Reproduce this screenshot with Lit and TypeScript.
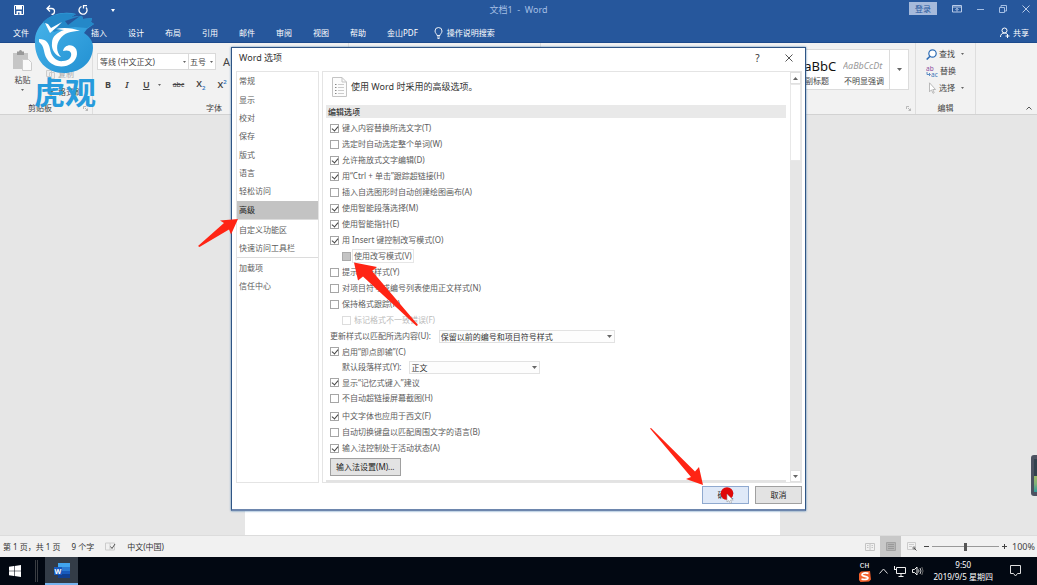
import { LitElement, html, css, svg } from "lit";
import { customElement, property } from "lit/decorators.js";
import { classMap } from "lit/directives/class-map.js";

interface Option {
  label: string;
  checked?: boolean;
  level?: number;
  state?: "focus" | "disabled";
}

const navGroups: string[][] = [
  ["常规", "显示", "校对", "保存", "版式", "语言", "轻松访问", "高级"],
  ["自定义功能区", "快速访问工具栏"],
  ["加载项", "信任中心"],
];

const editing: Option[] = [
  { label: "键入内容替换所选文字(T)", checked: true },
  { label: "选定时自动选定整个单词(W)" },
  { label: "允许拖放式文字编辑(D)", checked: true },
  { label: "用“Ctrl + 单击”跟踪超链接(H)", checked: true },
  { label: "插入自选图形时自动创建绘图画布(A)" },
  { label: "使用智能段落选择(M)", checked: true },
  { label: "使用智能指针(E)", checked: true },
  { label: "用 Insert 键控制改写模式(O)", checked: true },
  { label: "使用改写模式(V)", level: 1, state: "focus" },
  { label: "提示更新样式(Y)" },
  { label: "对项目符号或编号列表使用正文样式(N)" },
  { label: "保持格式跟踪(R)" },
  { label: "标记格式不一致错误(F)", level: 1, state: "disabled" },
];

const language: Option[] = [
  { label: "中文字体也应用于西文(F)", checked: true },
  { label: "自动切换键盘以匹配周围文字的语言(B)" },
  { label: "输入法控制处于活动状态(A)", checked: true },
];

const base = css`
  * {
    box-sizing: border-box;
  }
  button,
  input,
  select {
    font: inherit;
    color: inherit;
    margin: 0;
    padding: 0;
    border: 0;
    border-radius: 0;
    background: none;
    appearance: none;
  }
  svg {
    display: block;
    flex: none;
  }
`;

@customElement("options-dialog")
export class OptionsDialog extends LitElement {
  @property() selected = "高级";

  static styles = [
    base,
    css`
      :host {
        display: flex;
        flex-direction: column;
        background: #fff;
        border: 1px solid #2f5585;
        border-bottom-width: 2px;
        border-bottom-color: #6d86ad;
        box-shadow: 0 0 2px #4a7fb0;
        color: #5c5c5c;
      }
      .title {
        display: flex;
        align-items: center;
        height: 19px;
        padding: 0 12px 0 7px;
        color: #333;
      }
      .title h1 {
        flex: 1;
        margin: 0;
        font-size: 9px;
        font-weight: 400;
      }
      .title button {
        display: grid;
        place-items: center;
        width: 9px;
        height: 12px;
        font-size: 10px;
      }
      .title button + button {
        margin-left: 22px;
      }
      .body {
        flex: 1;
        min-height: 0;
        display: flex;
        gap: 3px;
        padding: 4px 3px 0 4px;
      }
      .nav {
        width: 83px;
        border: 1px solid #e4e4e4;
      }
      .group {
        display: flex;
        flex-direction: column;
      }
      .group + .group {
        border-top: 1px solid #dcdcdc;
      }
      .item {
        display: block;
        height: 18px;
        padding-left: 2px;
        text-align: left;
      }
      .group:first-child {
        height: 147px;
      }
      .group:first-child .item {
        flex: 1;
      }
      .group + .group .item:first-child {
        margin-top: 1px;
      }
      .item.on {
        background: #c3c3c3;
        color: #222;
      }
      .pane {
        flex: 1;
        display: flex;
        border: 1px solid #e4e4e4;
      }
      .scrolled {
        flex: 1;
        display: flex;
        flex-direction: column;
        padding: 0 4px 0 3px;
      }
      .head {
        display: flex;
        align-items: center;
        gap: 4px;
        height: 29px;
        margin-bottom: 4px;
        padding-left: 6px;
        font-size: 9px;
        color: #333;
      }
      h2 {
        height: 13px;
        margin: 0 0 2px;
        padding-left: 2px;
        line-height: 13px;
        font-size: 8px;
        font-weight: 500;
        background: #e9e9e9;
        color: #333;
      }
      .row {
        display: flex;
        align-items: center;
        height: 16px;
        padding-left: 4px;
      }
      .row.short {
        height: 15px;
      }
      .row.nested {
        padding-left: 16px;
      }
      .row.spaced {
        margin-top: 2px;
      }
      .check {
        display: flex;
        align-items: center;
        gap: 2px;
      }
      .check span {
        padding: 0 1px;
        line-height: 12px;
      }
      .check input {
        position: relative;
        width: 9px;
        height: 9px;
        border: 1px solid #a6a6a6;
      }
      .check input:checked::before {
        content: "";
        position: absolute;
        left: 2px;
        top: 0;
        width: 3px;
        height: 5px;
        border: solid #444;
        border-width: 0 1px 1px 0;
        transform: rotate(40deg);
      }
      .check.focus input {
        background: #c4c4c4;
        border-color: #aaa;
      }
      .check.focus span {
        outline: 1px solid #e6e6e6;
      }
      .check.disabled {
        color: #bbb;
      }
      .check.disabled input {
        border-color: #ddd;
      }
      .pick {
        position: relative;
        margin-left: 8px;
      }
      .pick select {
        display: block;
        height: 13px;
        padding: 0 1px;
        line-height: 11px;
        border: 1px solid #e2e2e2;
        background: #fdfdfd;
        color: #333;
      }
      .pick svg {
        position: absolute;
        right: 3px;
        top: 5px;
        pointer-events: none;
      }
      .wide select {
        width: 176px;
      }
      .narrow select {
        width: 131px;
      }
      .button {
        border: 1px solid #a0a0a0;
        background: #e3e3e3;
        color: #222;
        height: 18px;
      }
      .ime {
        align-self: flex-start;
        margin: 2px 0 0 4px;
        padding: 0 5px;
      }
      .next {
        height: 2px;
        margin-top: auto;
        background: #e3e3e3;
      }
      .bar {
        display: flex;
        flex-direction: column;
        width: 11px;
        background: #e6e6e6;
      }
      .bar button {
        display: grid;
        place-items: center;
        height: 12px;
        background: #fff;
        border: 1px solid #e0e0e0;
      }
      .thumb {
        height: 77px;
        background: #fff;
        border: 1px solid #e8e8e8;
      }
      .bar button:last-child {
        margin-top: auto;
      }
      .foot {
        display: flex;
        justify-content: flex-end;
        gap: 6px;
        padding: 3px 3px 5px;
      }
      .foot .button {
        width: 47px;
      }
      .foot .ok {
        background: #dfe9f8;
        border-color: #8fa9cf;
      }
    `,
  ];

  private check(o: Option) {
    return html`<label class="check ${o.state ?? ""}">
      <input type="checkbox" .checked=${!!o.checked} ?disabled=${o.state === "disabled"} />
      <span>${o.label}</span>
    </label>`;
  }

  private row(o: Option, cls = "") {
    return html`<div class="row ${o.level ? "nested" : ""} ${cls}">${this.check(o)}</div>`;
  }

  private arrow(up = false) {
    return html`<svg width="5" height="3" viewBox="0 0 5 3" aria-hidden="true">
      <path d=${up ? "M0 3h5L2.500 0z" : "M0 0h5L2.500 3z"} fill="#666" />
    </svg>`;
  }

  render() {
    return html`
      <header class="title">
        <h1>Word 选项</h1>
        <button aria-label="帮助">?</button>
        <button aria-label="关闭">
          <svg width="8" height="8" viewBox="0 0 8 8"><path d="M.5.5l7 7M7.500.5l-7 7" stroke="#555" fill="none" /></svg>
        </button>
      </header>
      <div class="body">
        <nav class="nav">
          ${navGroups.map(
            (g) => html`<div class="group">
              ${g.map(
                (n) => html`<button
                  class=${classMap({ item: true, on: n === this.selected })}
                  @click=${() => (this.selected = n)}
                >${n}</button>`
              )}
            </div>`
          )}
        </nav>
        <section class="pane">
          <div class="scrolled">
            <div class="head">
              <svg width="15" height="20" viewBox="0 0 15 20">
                <path d="M.5.5h9.500l4.500 4.500v14.500H.5z" fill="#fcfcfc" stroke="#c4c4c4" />
                <path d="M10 .5V5h4.500" fill="none" stroke="#c4c4c4" />
                <path d="M3 7.500h1.500M3 10.500h1.500M3 13.500h1.500M3 16.500h1.500" stroke="#888" />
                <path d="M6 7.500h6M6 10.500h6M6 13.500h6M6 16.500h6" stroke="#ccc" />
              </svg>
              <span>使用 Word 时采用的高级选项。</span>
            </div>
            <h2>编辑选项</h2>
            ${editing.map((o) => this.row(o))}
            <div class="row">
              <label for="match">更新样式以匹配所选内容(U):</label>
              <div class="pick wide">
                <select id="match"><option>保留以前的编号和项目符号样式</option></select>
                ${this.arrow()}
              </div>
            </div>
            ${this.row({ label: "启用“即点即输”(C)", checked: true }, "short")}
            <div class="row nested">
              <label for="para">默认段落样式(Y):</label>
              <div class="pick narrow">
                <select id="para"><option>正文</option></select>
                ${this.arrow()}
              </div>
            </div>
            ${this.row({ label: "显示“记忆式键入”建议", checked: true }, "short")}
            ${this.row({ label: "不自动超链接屏幕截图(H)" })}
            ${language.map((o, i) => this.row(o, i === 0 ? "spaced" : ""))}
            <button class="button ime">输入法设置(M)...</button>
            <div class="next"></div>
          </div>
          <div class="bar">
            <button aria-label="向上滚动">${this.arrow(true)}</button>
            <div class="thumb"></div>
            <button aria-label="向下滚动">${this.arrow()}</button>
          </div>
        </section>
      </div>
      <footer class="foot">
        <button class="button ok">确定</button>
        <button class="button">取消</button>
      </footer>
    `;
  }
}

const tabs = ["插入", "设计", "布局", "引用", "邮件", "审阅", "视图", "帮助", "金山PDF"];

const drop = html`<svg width="3" height="2" viewBox="0 0 3 2"><path d="M0 0h3L1.500 2z" fill="#666" /></svg>`;
const launcher = html`<svg width="5" height="5" viewBox="0 0 5 5"><path d="M.5 3V.5H3M2 2l2.500 2.500M4.500 2.500v2h-2" fill="none" stroke="#aaa" stroke-width=".8" /></svg>`;

@customElement("app-root")
export class AppRoot extends LitElement {
  static styles = [
    base,
    css`
      :host {
        position: relative;
        display: flex;
        flex-direction: column;
        min-height: 100vh;
        overflow: hidden;
        font: 8px/12px "Noto Sans", "Noto Sans CJK SC", sans-serif;
        color: #444;
        background: #e6e6e6;
      }
      .top {
        height: 43px;
        background: #26579c;
        border-bottom: 1px solid #1c4a8c;
        color: #fff;
      }
      .caption {
        display: grid;
        grid-template-columns: 1fr auto 1fr;
        align-items: center;
        height: 20px;
      }
      .quick {
        display: flex;
        align-items: center;
        gap: 22px;
        padding-left: 14px;
      }
      .name {
        font-size: 9px;
        color: #a5bfe4;
      }
      .win {
        display: flex;
        justify-content: flex-end;
        align-items: center;
        gap: 15px;
        padding: 0 7px 3px 0;
      }
      .login {
        width: 28px;
        height: 13px;
        background: #a6badb;
        color: #26579c;
      }
      .tabs {
        display: flex;
        align-items: center;
        gap: 21px;
        height: 25px;
        padding: 0 8px 0 13px;
      }
      .tabs button:first-child {
        margin-right: 41px;
      }
      .tell,
      .share {
        display: flex;
        align-items: center;
        gap: 4px;
      }
      .tell {
        margin-left: -5px;
      }
      .share {
        gap: 3px;
        margin-left: auto;
      }
      .ribbon {
        display: flex;
        height: 72px;
        background: #f2f2f2;
        border-bottom: 1px solid #d2d2d2;
      }
      .set {
        display: grid;
        grid-template-rows: 1fr 12px;
        padding: 5px 4px 0;
        border-right: 1px solid #dedede;
      }
      .cap {
        display: flex;
        align-items: center;
        justify-content: space-between;
      }
      .clip {
        width: 93px;
      }
      .clip .cap {
        padding-left: 24px;
      }
      .clip .in {
        display: flex;
        gap: 14px;
        padding-left: 9px;
      }
      .paste {
        display: flex;
        flex-direction: column;
        align-items: center;
        gap: 3px;
        padding-top: 2px;
      }
      .cuts {
        display: flex;
        flex-direction: column;
        gap: 6px;
        padding-top: 2px;
      }
      .cuts button {
        display: flex;
        align-items: center;
        gap: 3px;
        color: #aaa;
      }
      .cuts button:last-child {
        color: #444;
      }
      .font {
        width: 256px;
      }
      .font .cap {
        padding-left: 109px;
      }
      .line {
        display: flex;
        align-items: center;
        height: 17px;
        margin-top: 5px;
      }
      .combo {
        display: flex;
        align-items: center;
        height: 17px;
        padding: 0 2px;
        background: #fff;
        border: 1px solid #dadada;
      }
      .combo input {
        flex: 1;
        min-width: 0;
      }
      .combo.face {
        width: 92px;
      }
      .combo.size {
        width: 28px;
        margin-left: -1px;
        padding-left: 1px;
      }
      .grow {
        margin-left: 7px;
        font-size: 11px;
      }
      .marks {
        gap: 12px;
        margin-top: 6px;
        padding-left: 8px;
        font-size: 9px;
      }
      .marks sub,
      .marks sup {
        font-size: 6px;
        line-height: 6px;
        color: #2f74c0;
      }
      .marks .more {
        display: flex;
        align-items: center;
        gap: 8px;
      }
      .marks u,
      .marks i,
      .marks .x {
        font-weight: 600;
      }
      .marks s {
        font-size: 7px;
      }
      .para {
        width: 192px;
      }
      .styles {
        flex: 1;
      }
      .gallery {
        display: flex;
        justify-content: flex-end;
        height: 41px;
        margin-top: 1px;
        padding-right: 2px;
      }
      .cell {
        width: 47px;
        padding: 5px 4px 0 1px;
        overflow: hidden;
        background: #fff;
        text-align: center;
        border: solid #dcdcdc;
        border-width: 1px 0;
        white-space: nowrap;
      }
      .cell b {
        display: flex;
        height: 17px;
        align-items: center;
        font-weight: 400;
        font-size: 13px;
        color: #111;
      }
      .cell.soft b {
        overflow: hidden;
        font-size: 9px;
        font-style: italic;
        color: #999;
      }
      .all {
        display: grid;
        place-items: center;
        width: 20px;
        background: #fff;
        border: 1px solid #dcdcdc;
      }
      .styles .cap {
        padding-left: 180px;
      }
      .edit {
        width: 60px;
      }
      .edit .in {
        display: flex;
        flex-direction: column;
        align-items: flex-start;
        gap: 5px;
        padding-left: 6px;
      }
      .edit .in button {
        display: flex;
        align-items: center;
        gap: 2px;
      }
      .edit .in button svg:nth-child(2) {
        margin-left: 4px;
      }
      .edit .cap {
        justify-content: center;
      }
      .rest {
        display: flex;
        align-items: flex-end;
        justify-content: flex-end;
        width: 61px;
        padding: 0 5px 4px;
      }
      .work {
        flex: 1;
        display: flex;
        justify-content: center;
        padding-right: 12px;
      }
      .page {
        width: 535px;
        background: #fff;
      }
      .status {
        display: flex;
        align-items: center;
        height: 22px;
        padding: 0 2px 0 3px;
        background: #f1f1f1;
        border-top: 1px solid #dcdcdc;
      }
      .facts {
        flex: 1;
        display: flex;
        align-items: center;
        gap: 11px;
        color: #333;
      }
      .view {
        display: grid;
        place-items: center;
        width: 21px;
        height: 22px;
      }
      .view.on {
        background: #c8c8c8;
      }
      .zoom {
        display: flex;
        align-items: center;
        gap: 3px;
        margin-left: 2px;
      }
      .zoom input {
        width: 67px;
        height: 9px;
        background: linear-gradient(#999, #999) center / 100% 1px no-repeat;
      }
      .zoom input::-webkit-slider-thumb {
        appearance: none;
        width: 3px;
        height: 8px;
        background: #555;
      }
      .zoom output {
        margin-left: 2px;
        font-size: 9px;
      }
      .tasks {
        display: flex;
        align-items: stretch;
        height: 28px;
        background: #020812;
        color: #fff;
      }
      .tasks > * {
        display: flex;
        align-items: center;
      }
      .start {
        padding: 0 9px;
        margin-right: 5px;
      }
      .grip {
        width: 3px;
        margin: 3px 7px 3px 0;
        border: solid #3a3d42;
        border-width: 0 1px;
      }
      .app {
        width: 33px;
        justify-content: center;
        background: #333c47;
        border-bottom: 2px solid #76b3ee;
      }
      .tray {
        flex: 1;
        justify-content: flex-end;
        gap: 6px;
        padding-right: 16px;
      }
      .ime,
      .clock {
        display: flex;
        flex-direction: column;
        align-items: center;
      }
      .ime {
        line-height: 11px;
        margin-right: 2px;
        font-family: "Liberation Mono", monospace;
      }
      .clock {
        margin: 0 11px 0 4px;
      }
      .dialog {
        position: absolute;
        left: 231px;
        top: 47px;
        width: 575px;
        height: 464px;
      }
      .brand {
        position: absolute;
        left: 34px;
        top: 10px;
        width: 62px;
        color: #279bdc;
        font: 700 31px/30px "Noto Sans CJK SC", sans-serif;
        text-align: center;
        white-space: nowrap;
      }
      .notes {
        position: absolute;
        left: 0;
        top: 0;
        pointer-events: none;
      }
      .widget {
        position: absolute;
        right: 0;
        top: 455px;
        width: 6px;
        height: 41px;
        padding: 4px 0 4px 3px;
        background: #4c5261;
        border-radius: 3px 0 0 3px;
      }
      .meter {
        height: 100%;
        background: linear-gradient(#32414d 50%, #9dba66 50%, #83b178 75%, #2f9c9c);
      }
    `,
  ];

  private top() {
    return html`<header class="top">
      <div class="caption">
        <div class="quick">
          <button aria-label="保存"><svg width="10" height="10" viewBox="0 0 10 10"><path d="M.5.5h9v9h-9z" fill="none" stroke="#fff" /><path d="M2 1h6v3.500H2zM2.500 6h5v3.500h-5z" fill="#fff" /><path d="M4 7.500h1.500v2H4z" fill="#26579c" /></svg></button>
          <button aria-label="撤消"><svg width="10" height="10" viewBox="0 0 10 10"><path d="M4 .5L1 3.500l3 3M1 3.500h4.500a3 3 0 0 1 0 6" fill="none" stroke="#fff" stroke-width="1.300" /></svg></button>
          <button aria-label="重复"><svg width="10" height="10" viewBox="0 0 10 10"><path d="M3.500 1.500a4 4 0 1 0 4.500 1M5.500 3.500V.7h3.500" fill="none" stroke="#fff" stroke-width="1.300" /></svg></button>
          <button aria-label="自定义快速访问工具栏"><svg width="6" height="3" viewBox="0 0 6 3"><path d="M1 0h4L3 3z" fill="#fff" /></svg></button>
        </div>
        <span class="name">文档1&nbsp; -&nbsp; Word</span>
        <div class="win">
          <button class="login">登录</button>
          <button aria-label="功能区显示选项"><svg width="10" height="8" viewBox="0 0 10 8"><path d="M.5.5h9v6.500h-9zM.5 2h9M5 6.500V3.500M3.500 4.800L5 3.300l1.500 1.500" fill="none" stroke="#b8cbe8" /></svg></button>
          <button aria-label="最小化"><svg width="7" height="8" viewBox="0 0 7 8"><path d="M0 4.500h7" stroke="#a5bfe4" /></svg></button>
          <button aria-label="还原"><svg width="8" height="8" viewBox="0 0 8 8"><path d="M.5 2.500h5v5h-5zM2 2V.5h5.500V6H6" fill="none" stroke="#a5bfe4" /></svg></button>
          <button aria-label="关闭"><svg width="8" height="8" viewBox="0 0 8 8"><path d="M.5.5l7 7M7.500.5l-7 7" fill="none" stroke="#b8cbe8" /></svg></button>
        </div>
      </div>
      <nav class="tabs">
        <button>文件</button>
        ${tabs.map((t) => html`<button>${t}</button>`)}
        <button class="tell"><svg width="9" height="12" viewBox="0 0 9 12"><path d="M3 8.500C3 7 1 6.200 1 4a3.500 3.500 0 0 1 7 0C8 6.200 6 7 6 8.500zM3 10h3M3.500 11.500h2" fill="none" stroke="#fff" stroke-width=".9" /></svg>操作说明搜索</button>
        <button class="share"><svg width="10" height="11" viewBox="0 0 10 11"><circle cx="4.500" cy="3.500" r="2.500" fill="none" stroke="#fff" /><path d="M.5 10c0-2.500 1.500-4 4-4 1 0 1.800.3 2.300.8M7.500 7v4M5.500 9h4" fill="none" stroke="#fff" /></svg>共享</button>
      </nav>
    </header>`;
  }

  private ribbon() {
    return html`<div class="ribbon">
      <section class="set clip">
        <div class="in">
          <button class="paste">
            <svg width="19" height="21" viewBox="0 0 19 21"><path d="M0 3h15v16H0z" fill="#c6c6c6" /><path d="M4 1.500h2a1.500 1.500 0 0 1 3 0h2V5H4z" fill="#999" /><path d="M9.500 9.500h6l3 3v8h-9z" fill="#fafafa" stroke="#ccc" /></svg>
            粘贴 ${drop}
          </button>
          <div class="cuts">
            <button><svg width="9" height="9" viewBox="0 0 9 9"><path d="M2 0l4 6M7 0L3 6" stroke="#bbb" /><circle cx="2" cy="7" r="1.500" fill="none" stroke="#bbb" /><circle cx="7" cy="7" r="1.500" fill="none" stroke="#bbb" /></svg>剪切</button>
            <button><svg width="9" height="9" viewBox="0 0 9 9"><path d="M.5.5h5v6h-5zM3.500 2.500h5v6h-5z" fill="#eee" stroke="#ccc" /></svg>复制</button>
            <button><svg width="9" height="9" viewBox="0 0 9 9"><path d="M1 5l4 4 2-3-3-3z" fill="#eac078" /><path d="M5 4l3.500-3.500" stroke="#666" stroke-width="2" /></svg>格式刷</button>
          </div>
        </div>
        <div class="cap">剪贴板 ${launcher}</div>
      </section>
      <section class="set font">
        <div>
          <div class="line">
            <div class="combo face"><input aria-label="字体" value="等线 (中文正文)" />${drop}</div>
            <div class="combo size"><input aria-label="字号" value="五号" />${drop}</div>
            <button class="grow">A</button>
          </div>
          <div class="line marks">
            <button><b>B</b></button>
            <button><i>&nbsp;I&nbsp;</i></button>
            <button class="more"><u>U</u>${drop}</button>
            <button><s>abc</s></button>
            <button class="x">X<sub>2</sub></button>
            <button class="x">X<sup>2</sup></button>
          </div>
        </div>
        <div class="cap">字体 ${launcher}</div>
      </section>
      <section class="set para"></section>
      <section class="set styles">
        <div class="gallery">
          <button class="cell"><b>AaBbC</b>副标题</button>
          <button class="cell soft"><b>AaBbCcDt</b>不明显强调</button>
          <button class="all" aria-label="其他样式"><svg width="5" height="3" viewBox="0 0 5 3"><path d="M0 0h5L2.500 3z" fill="#666" /></svg></button>
        </div>
        <div class="cap">样式 ${launcher}</div>
      </section>
      <section class="set edit">
        <div class="in">
          <button><svg width="11" height="11" viewBox="0 0 11 11"><circle cx="6.500" cy="4.500" r="3.700" fill="#fff" stroke="#2f6db5" stroke-width="1.200" /><path d="M4 7.200L.7 10.500" stroke="#2f6db5" stroke-width="1.600" /></svg>查找 ${drop}</button>
          <button><svg width="12" height="12" viewBox="0 0 12 12"><g font-size="6.500" font-family="Noto Sans"><text x="0" y="5.500" fill="#8a4f9e">ab</text><text x="5" y="11.500" fill="#3a76ba">ac</text></g><path d="M1 7v2.500h3M3 8l1.500 1.500L3 11" fill="none" stroke="#3a76ba" stroke-width=".8" /></svg>替换</button>
          <button><svg width="11" height="12" viewBox="0 0 11 12"><path d="M3.500.8v9l2-2 1.500 3.500 1.200-.6L6.800 7.500h2.700z" fill="#fff" stroke="#aaa" stroke-width=".8" /></svg>选择 ${drop}</button>
        </div>
        <div class="cap">编辑</div>
      </section>
      <div class="rest"><svg width="6" height="4" viewBox="0 0 6 4"><path d="M.5 3.500L3 1l2.500 2.500" fill="none" stroke="#555" /></svg></div>
    </div>`;
  }

  private status() {
    return html`<footer class="status">
      <div class="facts">
        <span>第 1 页，共 1 页</span><span>9 个字</span>
        <svg width="11" height="9" viewBox="0 0 11 9"><path d="M.5 1h4.500v7H.5zM5 1h4.500v7H5" fill="none" stroke="#ccc" /><path d="M5.500 4.500L7 6.500 10 2" fill="none" stroke="#555" /></svg>
        <span>中文(中国)</span>
      </div>
      <button class="view" aria-label="阅读视图"><svg width="10" height="8" viewBox="0 0 10 8"><path d="M.5.5h9v7h-9zM5 .5v7M2 2.500h1.500M2 4.500h1.500M6.500 2.500H8M6.500 4.500H8" fill="none" stroke="#c4c4c4" /></svg></button>
      <button class="view on" aria-label="页面视图"><svg width="10" height="9" viewBox="0 0 10 9"><path d="M.5.5h9v8h-9z" fill="#b4b4b4" stroke="#a2a2a2" /><path d="M2 2.500h6M2 4.500h6M2 6.500h6" stroke="#999" /></svg></button>
      <button class="view" aria-label="Web 版式视图"><svg width="10" height="9" viewBox="0 0 10 9"><path d="M.5.5h8v7h-8zM2 2.500h5M2 4.500h3" fill="none" stroke="#ccc" /><circle cx="7" cy="6" r="1.700" fill="#999" /><path d="M7 6l2.500 2.500" stroke="#555" /></svg></button>
      <div class="zoom">
        <button aria-label="缩小"><svg width="5" height="5" viewBox="0 0 5 5"><path d="M0 2.500h5" stroke="#444" /></svg></button>
        <input type="range" aria-label="缩放" min="0" max="200" value="100" />
        <button aria-label="放大"><svg width="5" height="5" viewBox="0 0 5 5"><path d="M0 2.500h5M2.500 0v5" stroke="#444" /></svg></button>
        <output>100%</output>
      </div>
    </footer>`;
  }

  private taskbar() {
    return html`<footer class="tasks">
      <button class="start" aria-label="开始"><svg width="12" height="12" viewBox="0 0 12 12"><path d="M0 1.700L5 1v4.700H0zM5.600.9L12 0v5.700H5.600zM0 6.300h5V11l-5-.7zM5.600 6.300H12V12l-6.400-.9z" fill="#fff" /></svg></button>
      <i class="grip"></i>
      <button class="app" aria-label="Word"><svg width="16" height="15" viewBox="0 0 16 15"><path d="M4 0h12v4H4z" fill="#41a5ee" /><path d="M4 4h12v4H4z" fill="#2b7cd3" /><path d="M4 8h12v3H4z" fill="#185abd" /><path d="M4 11h12v4H4z" fill="#103f91" /><path d="M0 4h8v8H0z" fill="#185abd" /><text x="4" y="10.500" font-size="7" font-weight="700" fill="#fff" text-anchor="middle">W</text></svg></button>
      <div class="tray">
        <div class="ime">CH<svg width="12" height="11" viewBox="0 0 12 11"><path d="M2 .5L11 0l1 8.500-2 2L1.500 11 0 9V2.500z" fill="#f4602a" /><path d="M9.500 2.300C6 1.500 3 2 3 3.700c0 1.800 6 1.400 6 3.200 0 1.500-3 2-6.500 1.300" fill="none" stroke="#fff" stroke-width="1.700" /></svg></div>
        <svg width="9" height="6" viewBox="0 0 9 6"><path d="M.5 5.500l4-4.500 4 4.500" fill="none" stroke="#ddd" /></svg>
        <svg width="12" height="11" viewBox="0 0 12 11"><path d="M2.500 1.500h9v6h-9zM7 7.500V10M4.500 10.500h5M.5 0v3M0 3.500h2.500" fill="none" stroke="#eee" /></svg>
        <svg width="12" height="10" viewBox="0 0 12 10"><path d="M.5 3.500h2L5 1v8L2.500 6.500h-2z" fill="none" stroke="#eee" /><path d="M6.500 3.500q1 1.500 0 3M8 2q2 3 0 6" fill="none" stroke="#ddd" stroke-width=".9" /><path d="M9.800 1q2.500 4 0 8" fill="none" stroke="#777" stroke-width=".9" /></svg>
        <div class="clock"><span>9:50</span><span>2019/9/5 星期四</span></div>
        <svg width="11" height="12" viewBox="0 0 11 12"><path d="M.5.5h10v8H7.500L5.500 11l-2-2.500h-3z" fill="none" stroke="#ddd" /></svg>
      </div>
    </footer>`;
  }

  private notes() {
    return svg`<svg class="notes" width="810" height="512" viewBox="0 0 810 512" aria-hidden="true">
      <g fill="#ff2414">
        <path d="M238 219L220 220.500l4 2.500L198 246l1.500 1L229 229.500l2 5z" />
        <path d="M354 262.500L377 267l-5 4L418 325l-1.500 1L363 276.500l-5 4z" />
        <path d="M650 428.500L691 477l-5 2L703 485 699 467l-4 4.500L651 428z" />
      </g>
      <circle cx="727" cy="493.500" r="6.300" fill="#e00808" />
      <path d="M727 494v8l2-1.500 1.200 2.800 1.400-.6-1.100-2.700h2.700z" fill="#fff" stroke="#999" stroke-width=".6" />
    </svg>`;
  }

  render() {
    return html`
      ${this.top()} ${this.ribbon()}
      <main class="work"><div class="page"></div></main>
      ${this.status()} ${this.taskbar()}
      <options-dialog class="dialog" role="dialog" aria-label="Word 选项"></options-dialog>
      <div class="brand">
        <svg width="62" height="66" viewBox="0 0 62 66">
          <defs>
            <linearGradient id="ball" x1="0" y1="0" x2="1" y2="1">
              <stop offset="0" stop-color="#48b4ea" />
              <stop offset="1" stop-color="#2290d2" />
            </linearGradient>
          </defs>
          <path d="M12 10C19 4 30 1 42 4l-5 3 11-1 1 3 9-1-1 4 3 2-7 5-3 4c6 4 9 8 9 15-1 16-14 25-29 25C12 63 1 50 1 33 0 24 5 15 12 10z" fill="url(#ball)" />
          <path d="M9 12c8-8 20-10 33-8l-5 3 11-1 1 3 9-1-1 4 3 2-7 4-12-1-13 2-8 3z" fill="#2488c8" />
          <path d="M31 11L46 6 34 15z" fill="#26579c" />
          <path d="M11 13l3 1 3 4 11-6-5 5-7 6z" fill="#fff" />
          <path d="M46 21c-9 0-16 2-20 8-4 5-4 13 1 18-5-1-10-7-9-14 0-7 6-11 12-13l-8-1c8-2 17-1 24 2z" fill="#fff" />
          <path d="M5 29c7 0 10 4 11 10 1 8 7 13 13 12 6 0 9-4 8-8-1-3-5-3-8-2 1-5 6-7 10-5 6 3 5 13-1 17-8 6-20 4-25-4-4-6-2-13-8-17z" fill="#fff" />
        </svg>
        虎观
      </div>
      ${this.notes()}
      <div class="widget"><div class="meter"></div></div>
    `;
  }
}
